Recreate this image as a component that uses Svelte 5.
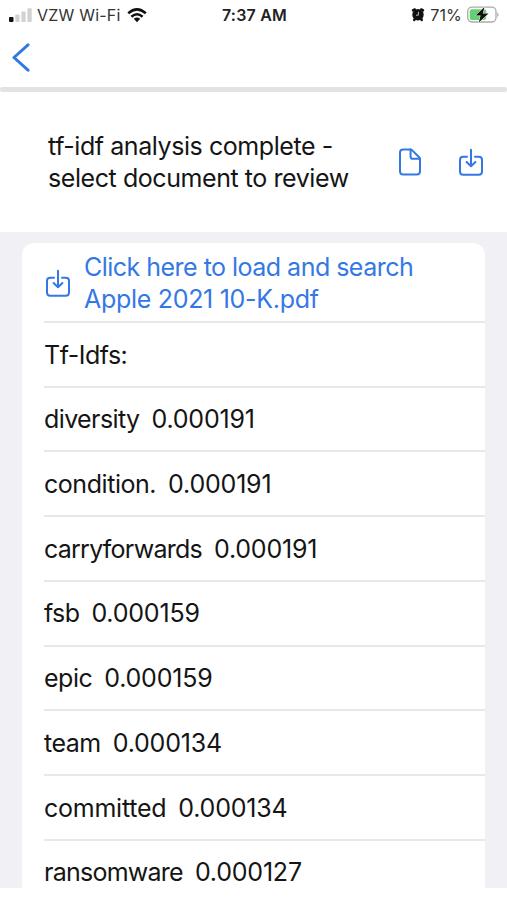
<script>
	const title = ['tf-idf analysis complete -', 'select document to review'];
	const link = ['Click here to load and search', 'Apple 2021 10-K.pdf'];

	const terms = [
		{ word: 'diversity', score: '0.000191', tracking: -.6 },
		{ word: 'condition.', score: '0.000191', tracking: -.45 },
		{ word: 'carryforwards', score: '0.000191', tracking: -.75 },
		{ word: 'fsb', score: '0.000159', tracking: -.6 },
		{ word: 'epic', score: '0.000159', tracking: -.5 },
		{ word: 'team', score: '0.000134', tracking: -.5 },
		{ word: 'committed', score: '0.000134', tracking: -.25 },
		{ word: 'ransomware', score: '0.000127', tracking: -.75 }
	];
</script>

{#snippet download()}
	<svg class="download" width="26" height="30" viewBox="0 0 26 30" aria-hidden="true">
		<path d="M9 9.8H5.2Q2 9.8 2 13V24.6Q2 27.8 5.2 27.8H20.8Q24 27.8 24 24.6V13Q24 9.8 20.8 9.8H17" />
		<path d="M13 2.8V19M8.6 15L13 19.2L17.4 15" />
	</svg>
{/snippet}

<div class="screen">
	<div class="status">
		<div class="side">
			<svg width="24" height="15" viewBox="0 0 24 15" aria-hidden="true">
				<rect x="0" y="9" width="4.5" height="5" rx="1" fill="#111" />
				<rect x="6.3" y="6.5" width="4.3" height="7.5" rx="1" fill="#d2d2d2" />
				<rect x="12.4" y="3.5" width="4.3" height="10.5" rx="1" fill="#d2d2d2" />
				<rect x="18.4" y="0.3" width="4.3" height="13.7" rx="1" fill="#d2d2d2" />
			</svg>
			<span class="carrier">VZW Wi-Fi</span>
			<svg class="wifi" width="20" height="15" viewBox="0 0 20 15" aria-hidden="true">
				<path d="M1.2 5.3Q10 -2.6 18.8 5.3" />
				<path d="M4.4 8.7Q10 3.8 15.6 8.7" />
				<path class="dot" d="M6.8 10.8Q10 8.3 13.2 10.8L10 14.2Z" />
			</svg>
		</div>
		<span class="time">7:37 AM</span>
		<div class="side right">
			<svg width="14" height="14" viewBox="0 0 14 14" aria-hidden="true">
				<path d="M2 2.4L3.8 1.4M12 2.4L10.2 1.4M3.2 12L4.2 10.4M10.8 12L9.8 10.4" stroke="#111" stroke-width="2.4" stroke-linecap="round" />
				<circle cx="7" cy="6.7" r="5.7" fill="#111" />
				<path d="M7.4 3.8V7.2H5" fill="none" stroke="#ccc" stroke-width=".9" />
			</svg>
			<span class="percent">71%</span>
			<svg width="34" height="18" viewBox="0 0 34 18" aria-hidden="true">
				<rect x="1.7" y="1.2" width="28.3" height="14.8" rx="4.2" fill="#fff" stroke="#aaa" stroke-width="1.3" />
				<rect x="3.7" y="3.2" width="16.5" height="10.8" rx="2.2" fill="#62d071" />
				<path d="M31.3 6.3Q34 8.8 31.3 11.3Z" fill="#aaa" />
				<path d="M18.5 1L9.6 9.6H14.6L12.8 16.6L22.5 7.6H16.8Z" fill="#111" stroke="#fff" stroke-width="1" paint-order="stroke" />
			</svg>
		</div>
	</div>

	<nav>
		<button class="back" aria-label="Back">
			<svg width="19" height="31" viewBox="0 0 19 31" aria-hidden="true">
				<path d="M17 2.8L3 15.5L17 28.2" />
			</svg>
		</button>
	</nav>
	<div class="divider"></div>

	<header>
		<h1>
			{#each title as line}
				<span>{line}</span>
			{/each}
		</h1>
		<div class="actions">
			<button aria-label="New document">
				<svg width="24" height="30" viewBox="0 0 24 30" aria-hidden="true">
					<path d="M12.6 2.5H5.2Q2 2.5 2 5.7V24.3Q2 27.5 5.2 27.5H18.8Q22 27.5 22 24.3V11.9Q22 11.1 21.4 10.5L14 3.1Q13.4 2.5 12.6 2.5Z" />
					<path d="M12.6 2.5V9.7Q12.6 11.8 14.7 11.8H22" />
				</svg>
			</button>
			<button aria-label="Import">{@render download()}</button>
		</div>
	</header>

	<main>
		<ul>
			<li class="load">
				{@render download()}
				<p>
					{#each link as line}
						<span>{line}</span>
					{/each}
				</p>
			</li>
			<li class="row heading">Tf-Idfs:</li>
			{#each terms as { word, score, tracking }}
				<li class="row">
					<span style="letter-spacing:{tracking}px">{word}</span>
					<span class="score">{score}</span>
				</li>
			{/each}
		</ul>
	</main>
</div>

<style>
	:global(body) {
		background: #fff;
		overflow: hidden;
	}

	.screen {
		--blue: #3478e5;
		height: 900px;
		background: #fff;
		color: #151515;
		font-family: Inter, "Liberation Sans", sans-serif;
		font-size: 25px;
		line-height: 32.4px;
	}

	.status {
		display: grid;
		grid-template-columns: 1fr auto 1fr;
		align-items: center;
		height: 30px;
		padding: 0 7px 0 9px;
		font-size: 16px;
		line-height: 20px;
	}

	.side {
		display: flex;
		align-items: center;
	}

	.right {
		justify-content: flex-end;
	}

	.carrier {
		margin: 0 6px 0 4px;
		color: #333;
		letter-spacing: .2px;
	}

	.wifi path {
		fill: none;
		stroke: #111;
		stroke-width: 2.5;
	}

	.wifi .dot {
		fill: #111;
		stroke: none;
	}

	.time {
		font-weight: 600;
		letter-spacing: .2px;
		color: #222;
	}

	.percent {
		margin: 0 4px 0 5px;
		color: #333;
		letter-spacing: .2px;
	}

	nav {
		display: flex;
		align-items: center;
		box-sizing: border-box;
		height: 57px;
		padding: 0 11px 3px;
	}

	.divider {
		height: 5px;
		background: #e3e3e3;
		border-radius: 3px;
	}

	button {
		display: flex;
		padding: 0;
		border: 0;
		background: none;
	}

	svg {
		display: block;
		flex: none;
	}

	button path,
	.download path {
		fill: none;
		stroke: var(--blue);
		stroke-width: 2;
		stroke-linecap: round;
		stroke-linejoin: round;
	}

	.back path {
		stroke-width: 3;
	}

	header {
		display: flex;
		justify-content: space-between;
		align-items: center;
		box-sizing: border-box;
		height: 140px;
		padding: 0 23px 0 48px;
	}

	h1,
	p {
		margin: 0;
		font-size: inherit;
		font-weight: 400;
		letter-spacing: -.43px;
	}

	p {
		letter-spacing: -.52px;
	}

	p span:last-child {
		letter-spacing: -.3px;
	}

	h1 span,
	p span {
		display: block;
		white-space: nowrap;
	}

	.actions {
		display: flex;
		gap: 36px;
	}

	main {
		box-sizing: border-box;
		height: 656px;
		padding: 11px 22px 0;
		background: #f0f0f5;
		overflow: hidden;
	}

	ul {
		height: 100%;
		margin: 0;
		padding: 0 0 0 22px;
		list-style: none;
		background: #fff;
		border-radius: 12px 12px 0 0;
		overflow: hidden;
	}

	li {
		display: flex;
		align-items: center;
		box-sizing: border-box;
		border-bottom: 2px solid #e8e8ea;
		white-space: nowrap;
	}

	.load {
		gap: 13px;
		height: 79.75px;
		padding: 3px 0 0 1px;
		color: var(--blue);
	}

	.row {
		height: 64.75px;
		padding-top: 1px;
	}

	.heading {
		padding-top: 2px;
		letter-spacing: -.5px;
	}

	.score {
		margin-left: 12px;
		letter-spacing: -.2px;
	}
</style>
